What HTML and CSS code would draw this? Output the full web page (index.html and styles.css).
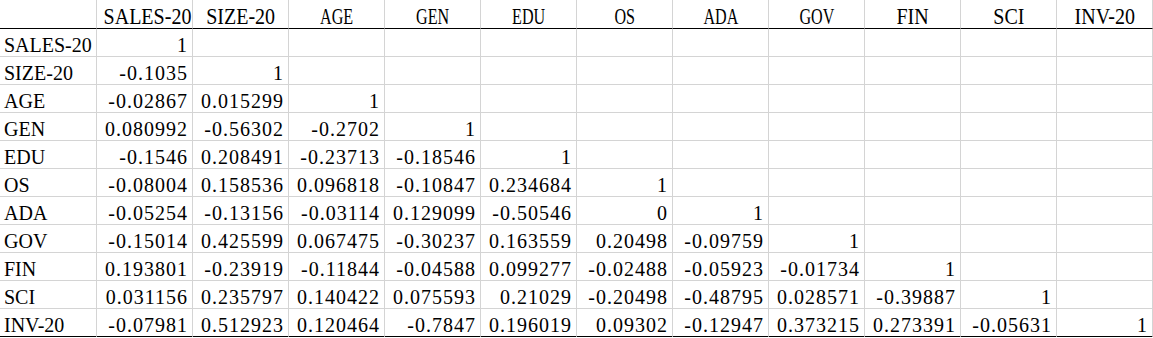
FILE: index.html
```html
<!DOCTYPE html>
<html>
<head>
<meta charset="utf-8">
<link rel="stylesheet" href="styles.css">
</head>
<body>
<div class="sheet">
  <div class="c h"></div>
  <div class="c h"><span class="m">SALES-20</span></div>
  <div class="c h"><span class="m">SIZE-20</span></div>
  <div class="c h"><span class="s">AGE</span></div>
  <div class="c h"><span class="s">GEN</span></div>
  <div class="c h"><span class="s">EDU</span></div>
  <div class="c h"><span class="s">OS</span></div>
  <div class="c h"><span class="s">ADA</span></div>
  <div class="c h"><span class="s">GOV</span></div>
  <div class="c h"><span class="m">FIN</span></div>
  <div class="c h"><span class="m">SCI</span></div>
  <div class="c h"><span class="m">INV-20</span></div>

  <div class="c l">SALES-20</div><div class="c n">1</div><div class="c"></div><div class="c"></div><div class="c"></div><div class="c"></div><div class="c"></div><div class="c"></div><div class="c"></div><div class="c"></div><div class="c"></div><div class="c"></div>

  <div class="c l">SIZE-20</div><div class="c n">-0.1035</div><div class="c n">1</div><div class="c"></div><div class="c"></div><div class="c"></div><div class="c"></div><div class="c"></div><div class="c"></div><div class="c"></div><div class="c"></div><div class="c"></div>

  <div class="c l">AGE</div><div class="c n">-0.02867</div><div class="c n">0.015299</div><div class="c n">1</div><div class="c"></div><div class="c"></div><div class="c"></div><div class="c"></div><div class="c"></div><div class="c"></div><div class="c"></div><div class="c"></div>

  <div class="c l">GEN</div><div class="c n">0.080992</div><div class="c n">-0.56302</div><div class="c n">-0.2702</div><div class="c n">1</div><div class="c"></div><div class="c"></div><div class="c"></div><div class="c"></div><div class="c"></div><div class="c"></div><div class="c"></div>

  <div class="c l">EDU</div><div class="c n">-0.1546</div><div class="c n">0.208491</div><div class="c n">-0.23713</div><div class="c n">-0.18546</div><div class="c n">1</div><div class="c"></div><div class="c"></div><div class="c"></div><div class="c"></div><div class="c"></div><div class="c"></div>

  <div class="c l">OS</div><div class="c n">-0.08004</div><div class="c n">0.158536</div><div class="c n">0.096818</div><div class="c n">-0.10847</div><div class="c n">0.234684</div><div class="c n">1</div><div class="c"></div><div class="c"></div><div class="c"></div><div class="c"></div><div class="c"></div>

  <div class="c l">ADA</div><div class="c n">-0.05254</div><div class="c n">-0.13156</div><div class="c n">-0.03114</div><div class="c n">0.129099</div><div class="c n">-0.50546</div><div class="c n">0</div><div class="c n">1</div><div class="c"></div><div class="c"></div><div class="c"></div><div class="c"></div>

  <div class="c l">GOV</div><div class="c n">-0.15014</div><div class="c n">0.425599</div><div class="c n">0.067475</div><div class="c n">-0.30237</div><div class="c n">0.163559</div><div class="c n">0.20498</div><div class="c n">-0.09759</div><div class="c n">1</div><div class="c"></div><div class="c"></div><div class="c"></div>

  <div class="c l">FIN</div><div class="c n">0.193801</div><div class="c n">-0.23919</div><div class="c n">-0.11844</div><div class="c n">-0.04588</div><div class="c n">0.099277</div><div class="c n">-0.02488</div><div class="c n">-0.05923</div><div class="c n">-0.01734</div><div class="c n">1</div><div class="c"></div><div class="c"></div>

  <div class="c l">SCI</div><div class="c n">0.031156</div><div class="c n">0.235797</div><div class="c n">0.140422</div><div class="c n">0.075593</div><div class="c n">0.21029</div><div class="c n">-0.20498</div><div class="c n">-0.48795</div><div class="c n">0.028571</div><div class="c n">-0.39887</div><div class="c n">1</div><div class="c"></div>

  <div class="c l last">INV-20</div><div class="c n last">-0.07981</div><div class="c n last">0.512923</div><div class="c n last">0.120464</div><div class="c n last">-0.7847</div><div class="c n last">0.196019</div><div class="c n last">0.09302</div><div class="c n last">-0.12947</div><div class="c n last">0.373215</div><div class="c n last">0.273391</div><div class="c n last">-0.05631</div><div class="c n last">1</div>
</div>
</body>
</html>
```

FILE: styles.css
```css
html, body {
  margin: 0;
  padding: 0;
  background: #ffffff;
}

.sheet {
  display: grid;
  grid-template-columns: 97px repeat(11, 96px);
  grid-auto-rows: 28px;
  grid-template-rows: 29px;
  font-family: "Liberation Serif", "Times New Roman", serif;
  font-size: 20px;
  color: #000000;
  overflow: hidden;
}

.c {
  box-sizing: border-box;
  border-right: 1px solid #d4d4d4;
  border-bottom: 1px solid #d4d4d4;
  padding-top: 6px;
  line-height: 20px;
  white-space: nowrap;
  overflow: hidden;
}

.h {
  border-bottom: 1px solid #000000;
  text-align: center;
  padding-top: 7px;
  font-size: 23px;
}

.h span {
  display: inline-block;
}

.h .m {
  transform: scaleX(0.87);
}

.h .s {
  transform: scaleX(0.7);
}

.l {
  padding-left: 4px;
}

.n {
  text-align: right;
  padding-right: 4px;
  letter-spacing: 1px;
}

.last {
  border-bottom: 2px solid #000000;
  height: 29px;
}
```
